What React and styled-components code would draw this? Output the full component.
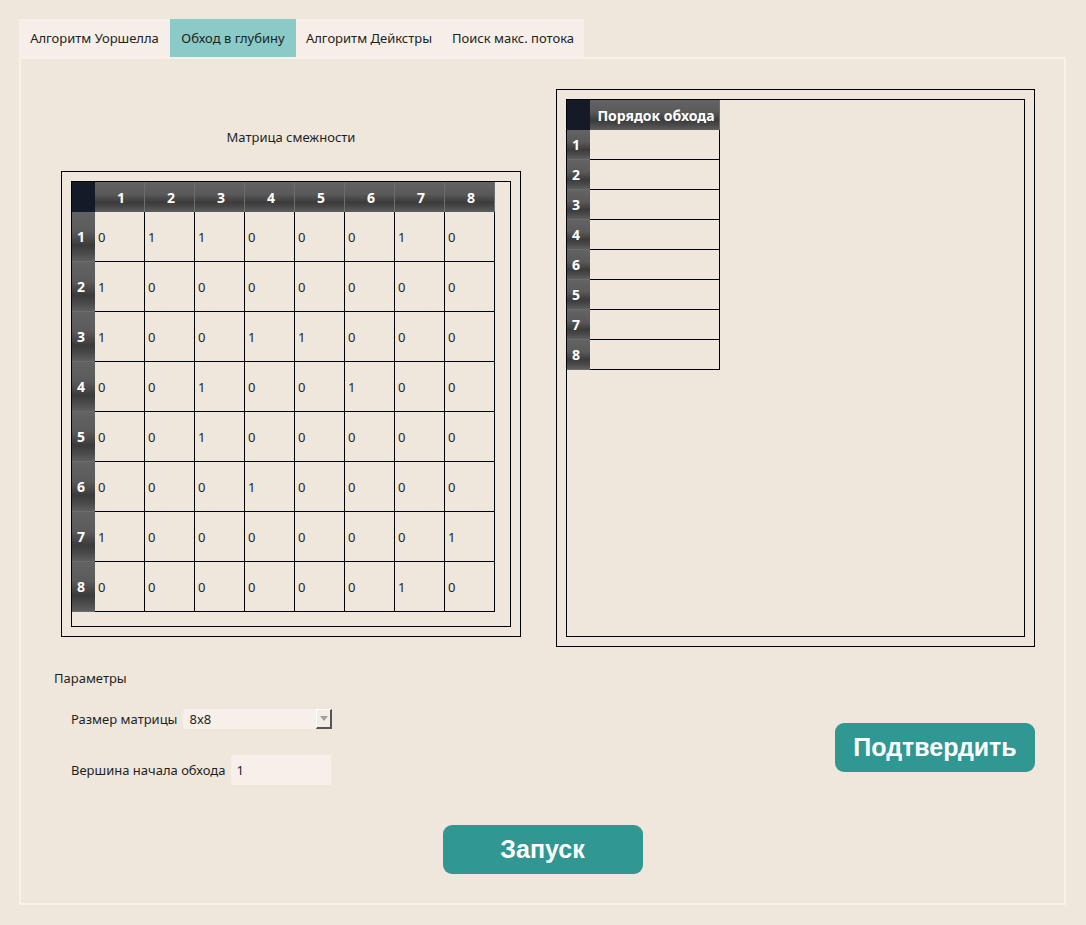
import React from 'react';
import styled, { createGlobalStyle } from 'styled-components';

const GlobalStyle = createGlobalStyle`
  html, body { margin: 0; padding: 0; background: #efe7dc; }
  body { font-family: "Noto Sans", "DejaVu Sans", sans-serif; color: #1f1f1f; }
  * { box-sizing: border-box; }
`;

const headerBg = 'linear-gradient(to bottom, #636363 0%, #5a5a5a 40%, #3b3b3b 68%, #4a4a4a 84%, #5e5e5e 100%)';

const Page = styled.div`
  width: 1086px;
  height: 925px;
  padding: 19px 0 0 19px;
`;

const TabBar = styled.div`
  display: flex;
  height: 38px;
`;

const Tab = styled.div`
  display: flex;
  align-items: center;
  justify-content: center;
  width: ${p => p.$w}px;
  font-size: 13px;
  color: #222;
  white-space: nowrap;
  background: ${p => (p.$active ? '#8acbc7' : '#f6efe9')};
`;

const Panel = styled.div`
  width: 1047px;
  height: 848px;
  border: 2px solid #f7f1ea;
  display: flex;
  flex-direction: column;
`;

const TopRow = styled.div`
  display: flex;
  align-items: flex-start;
  margin-top: 30px;
`;

const MatrixColumn = styled.div`
  display: flex;
  flex-direction: column;
  align-items: center;
  margin-left: 40px;
  padding-top: 40px;
`;

const Caption = styled.div`
  font-size: 13px;
  line-height: 16px;
  margin-bottom: 26px;
`;

const OuterFrame = styled.div`
  width: ${p => p.$w}px;
  height: ${p => p.$h}px;
  border: 1px solid #000;
  padding: 9px;
  margin-left: ${p => p.$ml || 0}px;
`;

const InnerFrame = styled.div`
  width: 100%;
  height: 100%;
  border: 1px solid #000;
`;

const Grid = styled.div`
  display: grid;
  grid-template-columns: 23px repeat(${p => p.$cols}, ${p => p.$cw}px);
  grid-template-rows: 30px repeat(${p => p.$rows}, ${p => p.$rh}px);
  width: max-content;
`;

const Corner = styled.div`
  background: #151a28;
`;

const ColHeader = styled.div`
  background: ${headerBg};
  border-right: 1px solid #6e6e6e;
  color: #fff;
  font-weight: 700;
  font-size: 14px;
  display: flex;
  align-items: center;
  justify-content: center;
  white-space: nowrap;
  padding-left: 3px;
`;

const RowHeader = styled.div`
  background: ${headerBg};
  border-bottom: 1px solid #6c6c6c;
  color: #fff;
  font-weight: 700;
  font-size: 14px;
  display: flex;
  align-items: center;
  padding-left: 5px;
`;

const Cell = styled.div`
  border-right: 1px solid #000;
  border-bottom: 1px solid #000;
  font-size: 13px;
  display: flex;
  align-items: center;
  padding-left: 3px;
`;

const ParamsLabel = styled.div`
  font-size: 13px;
  line-height: 16px;
  margin: 23px 0 0 33px;
`;

const BottomArea = styled.div`
  display: flex;
  align-items: center;
  justify-content: space-between;
  margin-top: 23px;
  padding: 0 29px 0 50px;
`;

const Form = styled.div`
  display: flex;
  flex-direction: column;
  gap: 26px;
`;

const FormRow = styled.div`
  display: flex;
  align-items: center;
  gap: 6px;
  font-size: 13px;
`;

const Combo = styled.div`
  width: 149px;
  height: 20px;
  background: #f7f0ea;
  border-radius: 3px 0 0 3px;
  display: flex;
  align-items: center;
  justify-content: space-between;
  padding-left: 6px;
  font-size: 13px;
`;

const ComboArrow = styled.div`
  width: 16px;
  height: 20px;
  background: #f3ede6;
  border-right: 2px solid #555;
  border-bottom: 2px solid #555;
  border-left: 1px solid #fff;
  border-top: 1px solid #fff;
  display: flex;
  align-items: center;
  justify-content: center;
  &::after {
    content: '';
    border-left: 4px solid transparent;
    border-right: 4px solid transparent;
    border-top: 5px solid #a0a0a0;
  }
`;

const Input = styled.div`
  width: 100px;
  height: 30px;
  background: #f7f0ea;
  display: flex;
  align-items: center;
  padding-left: 5px;
  font-size: 13px;
`;

const Button = styled.button`
  width: 200px;
  height: 49px;
  border: none;
  border-radius: 9px;
  background: #319793;
  color: #fff;
  font-family: "Liberation Sans", Arial, sans-serif;
  font-weight: 700;
  font-size: 25px;
  padding: 0;
  margin: ${p => p.$m || 0};
  align-self: ${p => p.$align || 'auto'};
`;

const matrix = [
  [0, 1, 1, 0, 0, 0, 1, 0],
  [1, 0, 0, 0, 0, 0, 0, 0],
  [1, 0, 0, 1, 1, 0, 0, 0],
  [0, 0, 1, 0, 0, 1, 0, 0],
  [0, 0, 1, 0, 0, 0, 0, 0],
  [0, 0, 0, 1, 0, 0, 0, 0],
  [1, 0, 0, 0, 0, 0, 0, 1],
  [0, 0, 0, 0, 0, 0, 1, 0],
];

const order = [1, 2, 3, 4, 6, 5, 7, 8];

export default function App() {
  return (
    <Page>
      <GlobalStyle />
      <TabBar>
        <Tab $w={151}>Алгоритм Уоршелла</Tab>
        <Tab $w={126} $active>Обход в глубину</Tab>
        <Tab $w={146}>Алгоритм Дейкстры</Tab>
        <Tab $w={142}>Поиск макс. потока</Tab>
      </TabBar>
      <Panel>
        <TopRow>
          <MatrixColumn>
            <Caption>Матрица смежности</Caption>
            <OuterFrame $w={460} $h={466}>
              <InnerFrame>
                <Grid $cols={8} $cw={50} $rows={8} $rh={50}>
                  <Corner />
                  {matrix.map((_, i) => (
                    <ColHeader key={'h' + i}>{i + 1}</ColHeader>
                  ))}
                  {matrix.map((row, r) => (
                    <React.Fragment key={'r' + r}>
                      <RowHeader>{r + 1}</RowHeader>
                      {row.map((v, c) => (
                        <Cell key={c}>{v}</Cell>
                      ))}
                    </React.Fragment>
                  ))}
                </Grid>
              </InnerFrame>
            </OuterFrame>
          </MatrixColumn>
          <OuterFrame $w={479} $h={558} $ml={35}>
            <InnerFrame>
              <Grid $cols={1} $cw={130} $rows={8} $rh={30}>
                <Corner />
                <ColHeader>Порядок обхода</ColHeader>
                {order.map(n => (
                  <React.Fragment key={n}>
                    <RowHeader>{n}</RowHeader>
                    <Cell />
                  </React.Fragment>
                ))}
              </Grid>
            </InnerFrame>
          </OuterFrame>
        </TopRow>
        <ParamsLabel>Параметры</ParamsLabel>
        <BottomArea>
          <Form>
            <FormRow>
              Размер матрицы
              <Combo>
                8x8
                <ComboArrow />
              </Combo>
            </FormRow>
            <FormRow>
              Вершина начала обхода
              <Input>1</Input>
            </FormRow>
          </Form>
          <Button>Подтвердить</Button>
        </BottomArea>
        <Button $m="40px 0 0 0" $align="center">Запуск</Button>
      </Panel>
    </Page>
  );
}
